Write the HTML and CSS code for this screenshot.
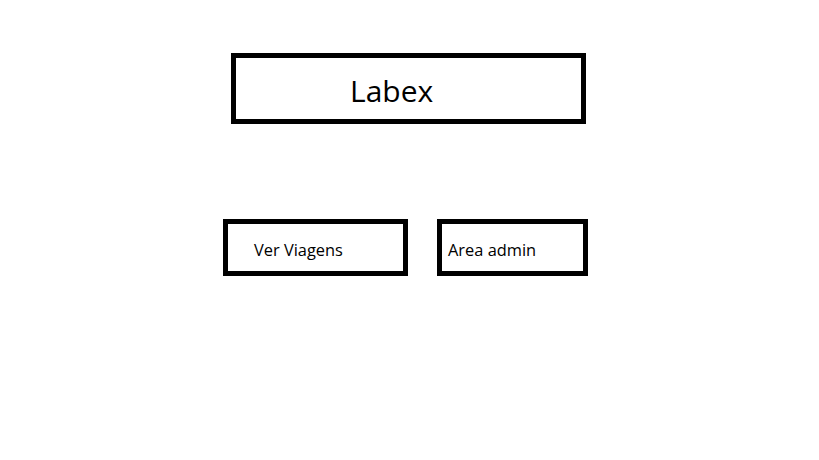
FILE: index.html
```html
<!DOCTYPE html>
<html lang="pt">
<head>
  <meta charset="UTF-8">
  <meta name="viewport" content="width=device-width, initial-scale=1.0">
  <title>Labex</title>
  <link rel="stylesheet" href="styles.css">
</head>
<body>
  <div class="page">
    <div class="title-box">
      <h1>Labex</h1>
    </div>

    <div class="actions">
      <button class="btn btn-viagens">Ver Viagens</button>
      <button class="btn btn-admin">Area admin</button>
    </div>
  </div>
</body>
</html>
```

FILE: styles.css
```css
body {
  margin: 0;
  font-family: "Open Sans", "Noto Sans", sans-serif;
  background-color: white;
  color: black;
}
.page {
  width: 819px;
  padding-top: 53px;
}
.title-box {
  box-sizing: border-box;
  width: 355px;
  height: 71px;
  margin-left: 231px;
  border: 5px solid black;
  padding-left: 114px;
  padding-top: 4px;
  display: flex;
  align-items: center;
}
.title-box h1 {
  margin: 0;
  font-size: 30px;
  font-weight: normal;
  line-height: 1;
}
.actions {
  display: flex;
  gap: 29px;
  margin-top: 95px;
  margin-left: 223px;
}
.btn {
  box-sizing: border-box;
  height: 57px;
  border: 5px solid black;
  background: white;
  font-family: inherit;
  font-size: 16.4px;
  color: black;
  text-align: left;
  padding: 3px 0 0 0;
  cursor: pointer;
}
.btn-viagens {
  width: 185px;
  padding-left: 26px;
}
.btn-admin {
  width: 151px;
  padding-left: 6px;
}
```
